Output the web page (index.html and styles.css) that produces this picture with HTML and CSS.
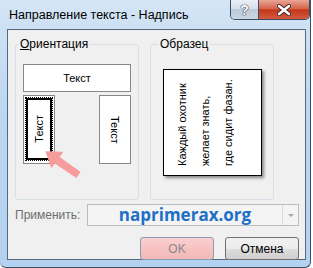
FILE: index.html
```html
<!DOCTYPE html>
<html lang="ru">
<head>
    <meta charset="UTF-8">
    <title>Направление текста - Надпись</title>
    <link rel="stylesheet" href="styles.css">
</head>
<body>

    <div class="window">
        <!-- Title bar -->
        <div class="titlebar">
            <span class="title">Направление текста - Надпись</span>
            <div class="caption-buttons">
                <div class="cap-btn help">?</div>
                <div class="cap-btn close">
                    <svg width="14" height="12" viewBox="0 0 14 12">
                        <path d="M2 2 L12 10 M12 2 L2 10" stroke="#4a3030" stroke-width="4.4" stroke-linecap="round"/>
                        <path d="M2 2 L12 10 M12 2 L2 10" stroke="#fff" stroke-width="2.4" stroke-linecap="round"/>
                    </svg>
                </div>
            </div>
        </div>

        <!-- Dialog body -->
        <div class="dialog">
            <div class="groups">
                <fieldset class="group orient">
                    <legend><u>О</u>риентация</legend>
                    <div class="opt opt-h">Текст</div>
                    <div class="vert-row">
                        <div class="opt opt-v">
                            <div class="focus">
                                <div class="focus-inner"><span class="up">Текст</span></div>
                            </div>
                        </div>
                        <div class="opt opt-v"><span class="down">Текст</span></div>
                        <!-- pink pointer -->
                        <svg class="pointer" width="40" height="32" viewBox="0 0 40 32">
                            <polygon points="1.5,2 17,2.5 13.6,7 34.5,22 31,27 9.5,12.3 6.5,16.8"
                                     fill="#f69c9d" stroke="#f69c9d" stroke-width="1.5" stroke-linejoin="round"/>
                        </svg>
                    </div>
                </fieldset>

                <fieldset class="group sample">
                    <legend>Образец</legend>
                    <div class="sample-page">
                        <p class="sample-text">Каждый охотник<br>желает знать,<br>где сидит фазан.</p>
                    </div>
                </fieldset>
            </div>

            <div class="apply-row">
                <label class="apply-label">Применить:</label>
                <div class="combo">
                    <span class="combo-value">naprimerax.org</span>
                    <span class="combo-arrow"></span>
                </div>
            </div>

            <div class="buttons">
                <button type="button" class="btn ok">OK</button>
                <button type="button" class="btn">Отмена</button>
            </div>
        </div>
    </div>

</body>
</html>
```

FILE: styles.css
```css
body {
    margin: 0;
    background-color: #fff;
    font-family: "Liberation Sans", Arial, sans-serif;
    font-size: 12px;
    color: #000;
}
.window {
    width: 311px;
    height: 268px;
    box-sizing: border-box;
    border-right: 1px solid #3d4e61;
    border-bottom: 1px solid #3d4e61;
    border-radius: 0 0 6px 6px;
    background: linear-gradient(#d4e5f5, #bcd7f1 40%, #b3d1f0);
    display: flex;
    flex-direction: column;
}
.titlebar {
    height: 29px;
    flex-shrink: 0;
    display: flex;
    justify-content: space-between;
    align-items: flex-start;
}
.title {
    padding: 8px 0 0 9px;
    line-height: 14px;
    font-size: 12.5px;
}
.caption-buttons {
    display: flex;
    height: 20px;
    box-sizing: border-box;
    border: 1px solid #3b4d62;
    border-top: none;
    border-radius: 0 0 5px 5px;
    overflow: hidden;
}
.cap-btn {
    display: flex;
    align-items: center;
    justify-content: center;
}
.help {
    width: 27px;
    background: linear-gradient(#e8eef5, #d6e0ea 45%, #bccbdb 50%, #c9d6e4);
    border-right: 1px solid #3b4d62;
    color: #fff;
    font-weight: bold;
    font-size: 14px;
    text-shadow: 0 0 1px #333, 0 0 1px #333, 0 0 1px #333;
}
.close {
    width: 50px;
    background: linear-gradient(#e9a696, #d5644c 45%, #c5361b 52%, #d35a3c);
}

/* dialog */
.dialog {
    margin-left: 7px;
    width: 299px;
    height: 231px;
    box-sizing: border-box;
    border: 1px solid #56697e;
    background-color: #f0f0f0;
    padding: 7px 6px 0 7px;
}
.groups {
    display: flex;
    gap: 11px;
}
.group {
    margin: 0;
    width: 124px;
    box-sizing: border-box;
    border: 1px solid #d5dfe5;
    border-radius: 3px;
    min-width: 0;
}
.group legend {
    padding: 0 2px;
    margin-left: -5px;
    line-height: 15px;
}
.orient {
    padding: 12px 7px 35px 7px;
}
.sample {
    padding: 17px 11px 23px 12px;
}
.opt {
    background-color: #fff;
    border: 1px solid #878787;
    box-sizing: border-box;
    display: flex;
    align-items: center;
    justify-content: center;
    font-size: 11px;
}
.opt-h {
    height: 28px;
}
.vert-row {
    position: relative;
    margin-top: 3px;
    display: flex;
    justify-content: space-between;
}
.opt-v {
    width: 32px;
    height: 69px;
}
.focus {
    width: 28px;
    height: 64px;
    margin-bottom: 1px;
    box-sizing: border-box;
    border: 1px dotted #000;
}
.focus-inner {
    height: 100%;
    box-sizing: border-box;
    border: 2px solid #000;
    display: flex;
    align-items: center;
    justify-content: center;
}
.up {
    writing-mode: vertical-rl;
    transform: rotate(180deg);
}
.down {
    writing-mode: vertical-rl;
}
.pointer {
    position: absolute;
    left: 22px;
    top: 55px;
}
.sample-page {
    width: 99px;
    height: 107px;
    box-sizing: border-box;
    border: 1px solid #000;
    background-color: #fff;
    box-shadow: 2px 2px 3px rgba(0, 0, 0, 0.45);
}
.sample-text {
    margin: 0;
    height: 100%;
    box-sizing: border-box;
    writing-mode: vertical-rl;
    transform: rotate(180deg);
    padding: 9px 7px 0 0;
    line-height: 23px;
    font-size: 11px;
}

/* apply row */
.apply-row {
    margin-top: 4px;
    display: flex;
    align-items: center;
}
.apply-label {
    width: 72px;
    color: #6d6d6d;
}
.combo {
    width: 212px;
    height: 22px;
    box-sizing: border-box;
    border: 1px solid #b9bcc0;
    background-color: #f4f4f4;
    display: flex;
}
.combo-value {
    flex: 1;
    text-align: center;
    font-family: "Open Sans", sans-serif;
    font-weight: bold;
    font-size: 17px;
    line-height: 19px;
    color: #1e70c6;
}
.combo-arrow {
    width: 15px;
    border-left: 1px solid #dcdcdc;
    display: flex;
    align-items: center;
    justify-content: center;
}
.combo-arrow::after {
    content: "";
    border-left: 3px solid transparent;
    border-right: 3px solid transparent;
    border-top: 3px solid #a6a6a6;
}

/* buttons */
.buttons {
    margin-top: 11px;
    display: flex;
    justify-content: flex-end;
    gap: 11px;
}
.btn {
    width: 74px;
    height: 23px;
    padding: 0;
    font-family: "Liberation Sans", Arial, sans-serif;
    font-size: 12px;
    color: #000;
    border: 1px solid #707070;
    border-radius: 3px;
    background: linear-gradient(#f2f2f2, #ebebeb 50%, #dddddd 50%, #cfcfcf);
}
.btn.ok {
    color: #8a8a8a;
    border-color: #8a9bb6;
    background: linear-gradient(#fbcfcf, #f7c2c2 50%, #f4b9b9);
}
```
